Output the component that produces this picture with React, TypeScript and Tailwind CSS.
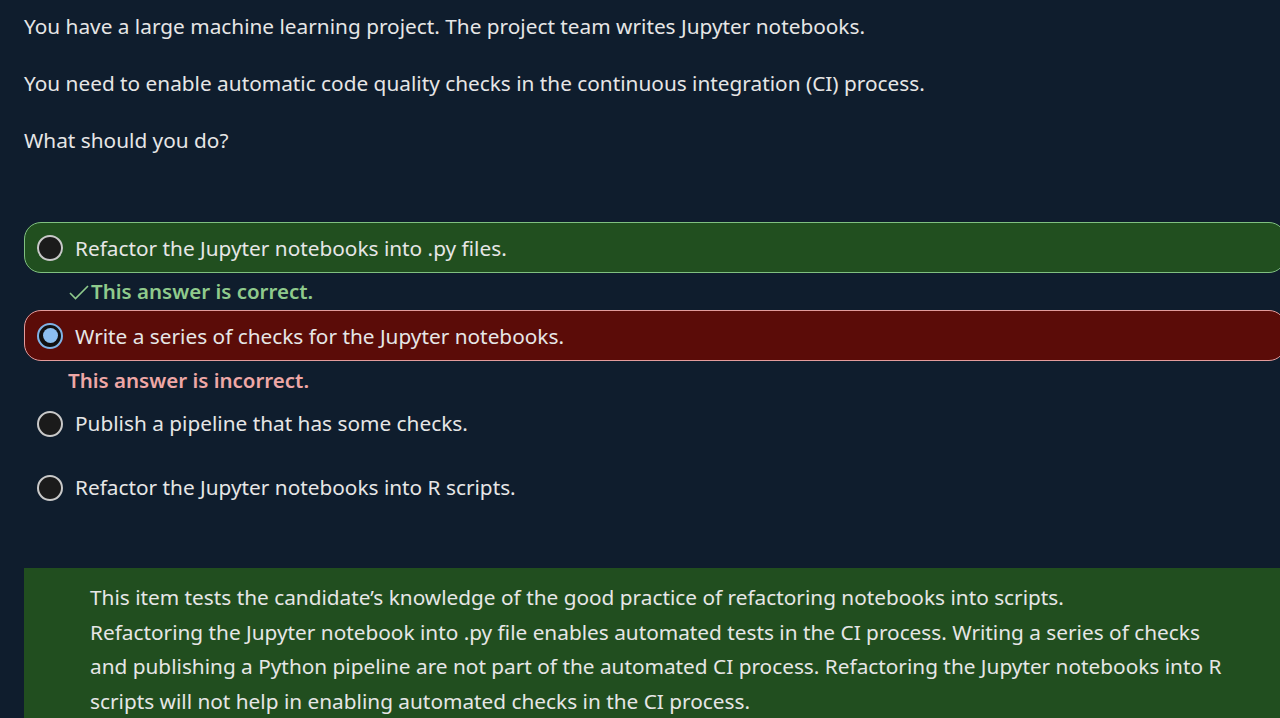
import React from 'react';

const font = { fontFamily: '"Noto Sans", "Open Sans", sans-serif' };

const Radio = ({ selected }: { selected?: boolean }) =>
  selected ? (
    <span className="flex h-[26px] w-[26px] shrink-0 items-center justify-center rounded-full border-2 border-[#7fb3e6] bg-[#111]">
      <span className="h-[15px] w-[15px] rounded-full bg-[#8cbff0]" />
    </span>
  ) : (
    <span className="h-[26px] w-[26px] shrink-0 rounded-full border-2 border-[#c9c9c9] bg-[#1b1b1b]" />
  );

const options = [
  { text: 'Refactor the Jupyter notebooks into .py files.', state: 'correct' },
  { text: 'Write a series of checks for the Jupyter notebooks.', state: 'incorrect' },
  { text: 'Publish a pipeline that has some checks.', state: 'none' },
  { text: 'Refactor the Jupyter notebooks into R scripts.', state: 'none' },
];

export default function App() {
  return (
    <div className="h-[718px] w-[1280px] overflow-hidden bg-[#0f1d2d] text-[#e6e6e6]" style={font}>
      <div className="pl-6 pt-[11px] text-[20.8px] leading-[30px]">
        <p>You have a large machine learning project. The project team writes Jupyter notebooks.</p>
        <p className="mt-[27px]">You need to enable automatic code quality checks in the continuous integration (CI) process.</p>
        <p className="mt-[27px]">What should you do?</p>
      </div>

      <div className="mt-[67px] pl-6">
        {options.map((o, i) => (
          <div key={i}>
            {o.state === 'correct' && (
              <>
                <div className="flex h-[51px] w-[1262px] items-center gap-[12px] rounded-[17px] border border-[#80c080] bg-[#214f1f] pl-[12px]">
                  <Radio />
                  <span className="pt-[2px] text-[20.8px]">{o.text}</span>
                </div>
                <div className="flex h-[37px] items-center pl-[44px] text-[20.5px] font-semibold text-[#8fca8c]">
                  <svg width="22" height="16" viewBox="0 0 22 16" className="mr-[1px]">
                    <path d="M2 9 L7.5 14.5 L20 2" fill="none" stroke="#8fca8c" strokeWidth="1.6" />
                  </svg>
                  This answer is correct.
                </div>
              </>
            )}
            {o.state === 'incorrect' && (
              <>
                <div className="flex h-[51px] w-[1262px] items-center gap-[12px] rounded-[17px] border border-[#e39c9c] bg-[#5b0c08] pl-[12px]">
                  <Radio selected />
                  <span className="pt-[2px] text-[20.8px]">{o.text}</span>
                </div>
                <div className="flex h-[38px] items-center pl-[44px] text-[20.5px] font-semibold text-[#eea7a6]">
                  This answer is incorrect.
                </div>
              </>
            )}
            {o.state === 'none' && (
              <div className={`flex items-center gap-[12px] pl-[13px] ${i === 2 ? 'h-[50px]' : 'mt-[14px] h-[50px]'}`}>
                <Radio />
                <span className="text-[20.8px]">{o.text}</span>
              </div>
            )}
          </div>
        ))}
      </div>

      <div className="ml-6 mt-[55px] bg-[#214e1f] pb-6 pl-[66px] pt-[12px] text-[20.8px] leading-[34.5px]">
        <p>This item tests the candidate’s knowledge of the good practice of refactoring notebooks into scripts.</p>
        <p>
          Refactoring the Jupyter notebook into .py file enables automated tests in the CI process. Writing a series of checks
          <br />
          and publishing a Python pipeline are not part of the automated CI process. Refactoring the Jupyter notebooks into R
          <br />
          scripts will not help in enabling automated checks in the CI process.
        </p>
      </div>
    </div>
  );
}
